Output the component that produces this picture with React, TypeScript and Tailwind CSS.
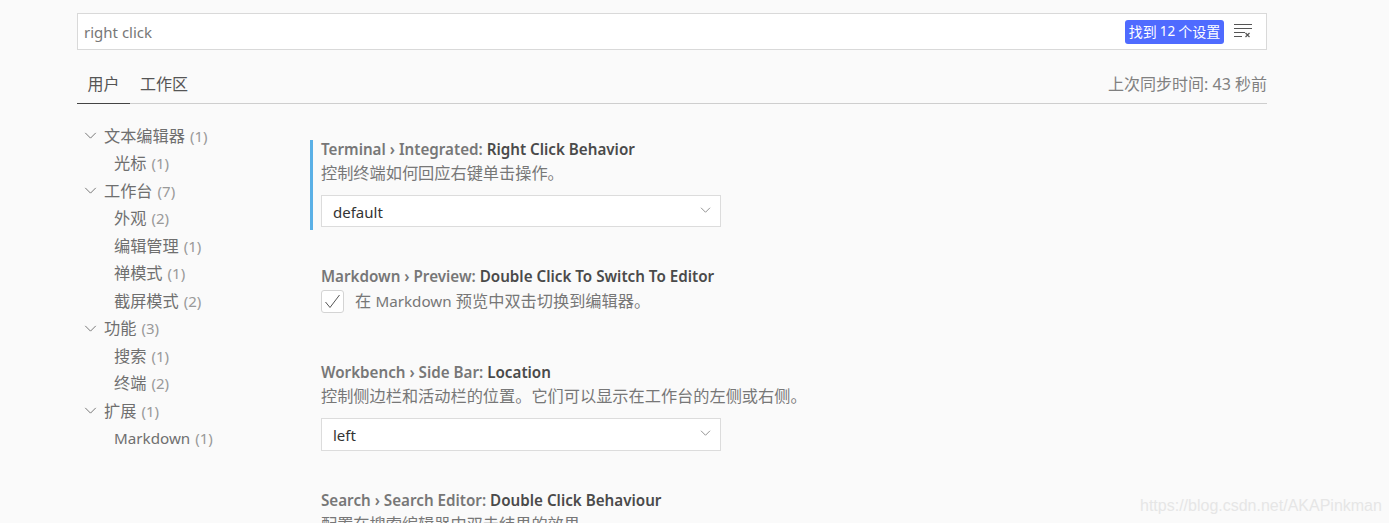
import React from 'react';

const font = "font-['Noto_Sans','Noto_Sans_CJK_SC',sans-serif]";

const tree = [
  { label: '文本编辑器', count: 1, top: true },
  { label: '光标', count: 1 },
  { label: '工作台', count: 7, top: true },
  { label: '外观', count: 2 },
  { label: '编辑管理', count: 1 },
  { label: '禅模式', count: 1 },
  { label: '截屏模式', count: 2 },
  { label: '功能', count: 3, top: true },
  { label: '搜索', count: 1 },
  { label: '终端', count: 2 },
  { label: '扩展', count: 1, top: true },
  { label: 'Markdown', count: 1, latin: true },
];

const Chevron = ({ className }: { className: string }) => (
  <svg className={className} viewBox="0 0 14 8" fill="none" stroke="currentColor" strokeWidth="1">
    <path d="M1 1l6 6 6-6" />
  </svg>
);

const SelectBox = ({ value, height }: { value: string; height: string }) => (
  <div className={`flex ${height} w-[400px] items-center justify-between border border-[#dcdcdc] bg-white pl-[11px] pr-[9px] text-[15px] text-[#333]`}>
    <span className="pt-[2px]">{value}</span>
    <Chevron className="mb-[3px] h-[6px] w-[11px] text-[#6f6f6f]" />
  </div>
);

const SettingTitle = ({ prefix, name }: { prefix: string; name: string }) => (
  <div className="h-[24px] text-[15.2px] leading-[24px] font-semibold text-[#777]">
    {prefix}<span className="text-[#4a4a4a]">{name}</span>
  </div>
);

const Desc = ({ children }: { children: React.ReactNode }) => (
  <div className="h-[24px] text-[16.2px] leading-[24px] text-[#777] [text-spacing-trim:space-all]">{children}</div>
);

export default function App() {
  return (
    <div className={`${font} relative h-[523px] w-[1389px] overflow-hidden bg-[#fafafa] pl-[77px] pt-[13px]`}>
      <div className="w-[1190px]">
        <div className="flex h-[37px] items-center justify-between border border-[#d9d9d9] bg-white pl-[6px] pr-[14px]">
          <span className="pt-[1px] text-[15px] text-[#777]">right click</span>
          <div className="flex items-center gap-[10px]">
            <span className="flex h-[24px] w-[99px] items-center justify-center rounded-[3px] bg-[#4f6bff] text-[14px] text-white">
              找到 <span className="mx-[3px] text-[13.5px]">12</span> 个设置
            </span>
            <svg className="mb-[1px] h-[14px] w-[18px] text-[#555]" viewBox="0 0 18 14" fill="none" stroke="currentColor" strokeWidth="1">
              <path d="M0 .5h18M0 4.5h18M0 8.5h11M0 12.5h8" />
              <path d="M11.5 9l4 4M15.5 9l-4 4" strokeWidth="1.2" />
            </svg>
          </div>
        </div>

        <div className="mt-[18px] flex h-[36px] items-stretch justify-between border-b border-[#cecece]">
          <div className="flex text-[16px] text-[#555]">
            <div className="-mb-px flex w-[53px] items-center justify-center border-b border-[#444] pb-[3px]">用户</div>
            <div className="flex items-center pb-[3px] pl-[10px]">工作区</div>
          </div>
          <div className="flex items-center pb-[3px] text-[16px] text-[#808080]">上次同步时间: 43 秒前</div>
        </div>

        <div className="flex pt-[18px]">
          <div className="w-[233px] shrink-0">
            {tree.map((item) => (
              <div key={item.label} className="flex h-[27.5px] items-center text-[#6f6f6f]">
                {item.top ? (
                  <Chevron className="ml-[7px] mr-[7px] h-[7px] w-[13px] shrink-0 text-[#666]" />
                ) : (
                  <span className="w-[37px] shrink-0" />
                )}
                <span className={item.latin ? 'text-[15.2px]' : 'text-[16.2px]'}>{item.label}</span>
                <span className="ml-[5px] text-[15px] text-[#999]">({item.count})</span>
              </div>
            ))}
          </div>

          <div className="pt-[18px]">
            <div className="flex h-[90px] flex-col border-l-[3px] border-[#5ab0e6] pl-[8px]">
              <div className="-mt-[3px]">
                <SettingTitle prefix="Terminal › Integrated: " name="Right Click Behavior" />
              </div>
              <Desc>控制终端如何回应右键单击操作。</Desc>
              <div className="mt-[10px]">
                <SelectBox value="default" height="h-[32px]" />
              </div>
            </div>

            <div className="mt-[34px] pl-[11px]">
              <SettingTitle prefix="Markdown › Preview: " name="Double Click To Switch To Editor" />
              <div className="mt-[1px] flex h-[24px] items-center text-[#777]">
                <span className="flex h-[23px] w-[23px] items-center justify-center rounded-[3px] border border-[#d4d4d4] bg-white">
                  <svg className="h-[15px] w-[17px] text-[#555]" viewBox="0 0 17 15" fill="none" stroke="currentColor" strokeWidth="1">
                    <path d="M1.5 8l4.5 5.5L15.5 1" />
                  </svg>
                </span>
                <span className="ml-[11px] text-[16.2px] [text-spacing-trim:space-all]">在 <span className="text-[15.2px]">Markdown</span> 预览中双击切换到编辑器。</span>
              </div>
            </div>

            <div className="mt-[47px] pl-[11px]">
              <SettingTitle prefix="Workbench › Side Bar: " name="Location" />
              <Desc>控制侧边栏和活动栏的位置。它们可以显示在工作台的左侧或右侧。</Desc>
              <div className="mt-[10px]">
                <SelectBox value="left" height="h-[33px]" />
              </div>
            </div>

            <div className="mt-[37px] pl-[11px]">
              <SettingTitle prefix="Search › Search Editor: " name="Double Click Behaviour" />
              <Desc>配置在搜索编辑器中双击结果的效果。</Desc>
            </div>
          </div>
        </div>
      </div>

      <div className="absolute left-[1140px] top-[494px] font-['Liberation_Sans',sans-serif] text-[16px] text-[#e6e6e6]">
        https://blog.csdn.net/AKAPinkman
      </div>
    </div>
  );
}
